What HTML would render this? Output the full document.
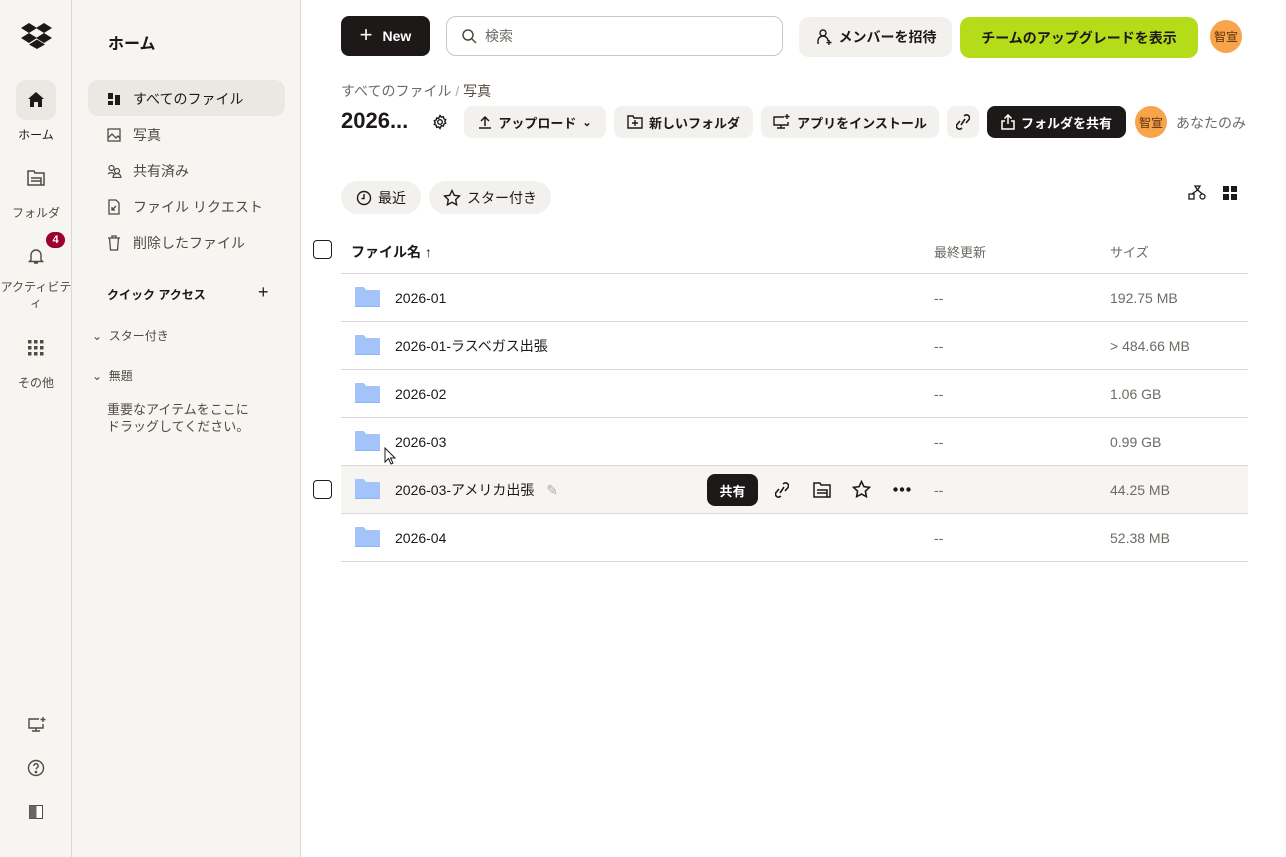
<!DOCTYPE html>
<html><head><meta charset="utf-8"><style>
*{box-sizing:border-box;margin:0;padding:0}
body{width:1286px;height:857px;overflow:hidden;font-family:"Liberation Sans","Noto Sans CJK JP",sans-serif;color:#1e1919;background:#fff;position:relative;font-size:14px}
.abs{position:absolute}
.rail{left:0;top:0;width:72px;height:857px;background:#f7f5f2;border-right:1px solid #dcd9d4}
.side{left:72px;top:0;width:229px;height:857px;background:#f7f5f2;border-right:1px solid #dcd9d4}
.rl{font-size:12px;color:#52493f;text-align:center;width:72px;left:0}
.si{left:107px;width:180px;font-size:14px;color:#52493f;display:flex;align-items:center;gap:10px}
.btn{background:#f3f1ee;border-radius:8px;display:flex;align-items:center;justify-content:center;font-size:13px;font-weight:bold;gap:6px}
.row{left:341px;width:907px;height:48px;border-bottom:1px solid #dcd9d4}
.fold{left:355px;width:25px;height:20px}
.nm{left:395px;font-size:14px;line-height:18px;height:18px}
.md{left:934px;color:#6f6a64;line-height:18px}
.sz{left:1110px;color:#6f6a64;font-size:14px;line-height:18px}
.cb{width:19px;height:19px;border:1.5px solid #1e1919;border-radius:4px}
</style></head><body>
<div class="abs rail"></div>
<div class="abs side"></div>
<svg class="abs" style="left:21px;top:23px" width="31" height="26" viewBox="0 0 31 26"><path fill="#1e1919" d="M8 0L0 5l8 5 8-5zM23 0l-8 5 8 5 8-5zM0 15l8 5 8-5-8-5zM23 10l-8 5 8 5 8-5zM8 21.5l8 4.5 8-4.5-8-5z"/></svg>
<div class="abs" style="left:16px;top:80px;width:40px;height:40px;border-radius:10px;background:#ebe8e3"></div>
<svg class="abs" style="left:26px;top:90px" width="20" height="20" viewBox="0 0 20 20"><path fill="#1e1919" d="M10 2L2 9h2v8h4v-5h4v5h4V9h2z"/></svg>
<div class="abs rl" style="top:126px;color:#1e1919">ホーム</div>
<svg class="abs" style="left:27px;top:170px" width="18" height="16" viewBox="0 0 18 16" fill="none" stroke="#52493f" stroke-width="1.5"><path d="M1 1h6l1 2h9v12H1z M4 8h10v7M4 11h10"/></svg>
<div class="abs rl" style="top:204px">フォルダ</div>
<svg class="abs" style="left:27px;top:247px" width="18" height="18" viewBox="0 0 18 18" fill="none" stroke="#52493f" stroke-width="1.4"><path d="M4 13V8a5 5 0 0110 0v5l1.5 1.5h-13zM7 16h4"/></svg>
<div class="abs" style="left:46px;top:232px;width:19px;height:16px;border-radius:8px;background:#9b0032;color:#fff;font-size:11px;font-weight:bold;text-align:center;line-height:16px">4</div>
<div class="abs rl" style="top:279px;line-height:16px">アクティビテ<br>ィ</div>
<svg class="abs" style="left:28px;top:340px" width="16" height="16" viewBox="0 0 16 16" fill="#52493f"><rect x="0" y="0" width="3.5" height="3.5"/><rect x="6" y="0" width="3.5" height="3.5"/><rect x="12" y="0" width="3.5" height="3.5"/><rect x="0" y="6" width="3.5" height="3.5"/><rect x="6" y="6" width="3.5" height="3.5"/><rect x="12" y="6" width="3.5" height="3.5"/><rect x="0" y="12" width="3.5" height="3.5"/><rect x="6" y="12" width="3.5" height="3.5"/><rect x="12" y="12" width="3.5" height="3.5"/></svg>
<div class="abs rl" style="top:374px">その他</div>
<svg class="abs" style="left:27px;top:716px" width="20" height="18" viewBox="0 0 20 18" fill="none" stroke="#52493f" stroke-width="1.4"><path d="M12 3H2v9h14V8M9 12v3M5 15h8M16 1v5M13.5 3.5h5"/></svg>
<svg class="abs" style="left:27px;top:759px" width="18" height="18" viewBox="0 0 18 18" fill="none" stroke="#52493f" stroke-width="1.4"><circle cx="9" cy="9" r="7.5"/><path d="M6.8 7a2.2 2.2 0 114 1.2c-.8.6-1.8 1-1.8 2.2"/><circle cx="9" cy="13" r=".6" fill="#52493f"/></svg>
<svg class="abs" style="left:29px;top:805px" width="14" height="14" viewBox="0 0 14 14"><rect x=".5" y=".5" width="13" height="13" fill="#fff" stroke="#52493f"/><rect x=".5" y=".5" width="7" height="13" fill="#6f6660"/></svg>

<div class="abs" style="left:108px;top:30px;font-size:16px;font-weight:bold">ホーム</div>
<div class="abs" style="left:88px;top:80px;width:197px;height:36px;border-radius:10px;background:#ebe8e3"></div>
<div class="abs si" style="top:89px;color:#1e1919"><svg width="14" height="14" viewBox="0 0 14 14" fill="#1e1919"><rect x="1" y="1" width="5" height="6"/><rect x="8" y="3" width="5" height="10"/><rect x="1" y="9" width="5" height="4"/></svg><span style="margin-left:2px">すべてのファイル</span></div>
<div class="abs si" style="top:125px"><svg width="14" height="14" viewBox="0 0 14 14" fill="none" stroke="#52493f" stroke-width="1.3"><rect x="1" y="1" width="12" height="12"/><path d="M1 10l4-4 4 4 2-2 2 2"/></svg><span style="margin-left:2px">写真</span></div>
<div class="abs si" style="top:161px"><svg width="16" height="14" viewBox="0 0 16 14" fill="none" stroke="#52493f" stroke-width="1.2"><circle cx="4.5" cy="4" r="2.5"/><circle cx="10" cy="7" r="2.5"/><path d="M1 10a4 4 0 016 0M6 13.5a4 4 0 018 0z"/></svg><span>共有済み</span></div>
<div class="abs si" style="top:197px"><svg width="14" height="16" viewBox="0 0 14 16" fill="none" stroke="#52493f" stroke-width="1.3"><path d="M2 1h7l3 3v11H2z M5 11l4-4M5 8v3h3"/></svg><span style="margin-left:2px">ファイル リクエスト</span></div>
<div class="abs si" style="top:233px"><svg width="14" height="16" viewBox="0 0 14 16" fill="none" stroke="#52493f" stroke-width="1.3"><path d="M1 3h12M5 3V1h4v2M2.5 3l1 12h7l1-12"/></svg><span style="margin-left:2px">削除したファイル</span></div>
<div class="abs" style="left:107px;top:286px;font-size:12px;font-weight:bold">クイック アクセス</div>
<div class="abs" style="left:258px;top:282px;font-size:18px">+</div>
<div class="abs" style="left:92px;top:327px;font-size:12px;color:#52493f">⌄&nbsp; スター付き</div>
<div class="abs" style="left:92px;top:367px;font-size:12px;color:#52493f">⌄&nbsp; 無題</div>
<div class="abs" style="left:107px;top:401px;font-size:13px;color:#52493f;line-height:17px">重要なアイテムをここに<br>ドラッグしてください。</div>

<div class="abs" style="left:341px;top:16px;width:89px;height:40px;background:#1e1919;border-radius:8px;color:#fff;font-weight:bold;font-size:14px;display:flex;align-items:center;justify-content:center;gap:10px"><span style="font-size:22px;font-weight:normal;margin-top:-3px">+</span>New</div>
<div class="abs" style="left:446px;top:16px;width:337px;height:40px;border:1px solid #ccc7c0;border-radius:10px;display:flex;align-items:center;padding-left:14px;color:#6f6a64;gap:8px"><svg width="16" height="16" viewBox="0 0 16 16" fill="none" stroke="#52493f" stroke-width="1.5"><circle cx="7" cy="7" r="5"/><path d="M11 11l4 4"/></svg>検索</div>
<div class="abs btn" style="left:799px;top:17px;width:153px;height:40px;font-size:14px;font-weight:bold;border-radius:10px"><svg width="18" height="18" viewBox="0 0 18 18" fill="none" stroke="#1e1919" stroke-width="1.4"><circle cx="8" cy="5" r="3"/><path d="M3 16v-3a5 5 0 0110 0M14 12v5M11.5 14.5h5"/></svg>メンバーを招待</div>
<div class="abs" style="left:960px;top:17px;width:238px;height:41px;background:#b4dc19;border-radius:10px;font-size:14px;font-weight:bold;display:flex;align-items:center;justify-content:center">チームのアップグレードを表示</div>
<div class="abs" style="left:1210px;top:20px;width:32px;height:33px;border-radius:50%;background:#f7a44b;font-size:12px;display:flex;align-items:center;justify-content:center;color:#5a2e0a">智宣</div>

<div class="abs" style="left:341px;top:81px;font-size:14px;color:#6f6a64">すべてのファイル <span style="color:#aaa">/</span> <span style="color:#52493f">写真</span></div>
<div class="abs" style="left:341px;top:108px;font-size:22px;font-weight:bold">2026...</div>
<svg class="abs" style="left:432px;top:114px" width="16" height="16" viewBox="0 0 16 16" fill="none" stroke="#1e1919" stroke-width="1.4"><circle cx="8" cy="8" r="2.3"/><path d="M8 1.5l1.3 1.6 2-.4.5 2 1.9.9-.9 1.8.9 1.8-1.9.9-.5 2-2-.4L8 14.5l-1.3-1.6-2 .4-.5-2-1.9-.9.9-1.8-.9-1.8 1.9-.9.5-2 2 .4z"/></svg>
<div class="abs btn" style="left:464px;top:106px;width:142px;height:32px"><svg width="14" height="14" viewBox="0 0 14 14" fill="none" stroke="#1e1919" stroke-width="1.5"><path d="M7 11V2M3 6l4-4 4 4M1 13h12"/></svg> アップロード <span style="font-size:11px">⌄</span></div>
<div class="abs btn" style="left:614px;top:106px;width:139px;height:32px"><svg width="16" height="14" viewBox="0 0 16 14" fill="none" stroke="#1e1919" stroke-width="1.4"><path d="M1 1h5l1 2h8v10H1zM8 5v6M5 8h6"/></svg>新しいフォルダ</div>
<div class="abs btn" style="left:761px;top:106px;width:178px;height:32px"><svg width="18" height="16" viewBox="0 0 18 16" fill="none" stroke="#1e1919" stroke-width="1.4"><path d="M11 3H1v8h14V8M8 11v3M4 14h8M14 0v5M11.5 2.5h5"/></svg>アプリをインストール</div>
<div class="abs btn" style="left:947px;top:106px;width:32px;height:32px"><svg width="14" height="18" viewBox="0 0 14 18" fill="none" stroke="#1e1919" stroke-width="1.6"><path d="M8 3l1.5-1a3 3 0 013.5 4.5L10 10M6 15l-1.5 1A3 3 0 011 11.5L4 8M9 6l-4 6"/></svg></div>
<div class="abs btn" style="left:987px;top:106px;width:139px;height:32px;background:#1e1919;color:#fff"><svg width="14" height="16" viewBox="0 0 14 16" fill="none" stroke="#fff" stroke-width="1.5"><path d="M7 10V1M3.5 4.5L7 1l3.5 3.5M4 7H1v8h12V7h-3"/></svg>フォルダを共有</div>
<div class="abs" style="left:1135px;top:106px;width:32px;height:32px;border-radius:50%;background:#f7a44b;font-size:12px;display:flex;align-items:center;justify-content:center;color:#5a2e0a">智宣</div>
<div class="abs" style="left:1176px;top:113px;font-size:14px;color:#6f6a64">あなたのみ</div>

<div class="abs btn" style="left:341px;top:181px;width:80px;height:33px;border-radius:17px;font-weight:normal;font-size:14px"><svg width="16" height="16" viewBox="0 0 16 16" fill="none" stroke="#1e1919" stroke-width="1.4"><circle cx="8" cy="8" r="6.5"/><path d="M8 4v4.5H5.5"/></svg>最近</div>
<div class="abs btn" style="left:429px;top:181px;width:122px;height:33px;border-radius:17px;font-weight:normal;font-size:14px"><svg width="18" height="18" viewBox="0 0 18 18" fill="none" stroke="#1e1919" stroke-width="1.4"><path d="M9 1.5l2.3 4.8 5.2.7-3.8 3.6.9 5.2L9 13.3l-4.6 2.5.9-5.2L1.5 7l5.2-.7z"/></svg>スター付き</div>
<svg class="abs" style="left:1188px;top:185px" width="19" height="16" viewBox="0 0 19 16" fill="none" stroke="#1e1919" stroke-width="1.3"><path d="M7 1h5l-2.5 4z"/><rect x="1" y="9" width="5" height="5"/><circle cx="14.5" cy="11.5" r="2.5"/><path d="M9.5 5L4 9M9.5 5l5 4"/></svg>
<svg class="abs" style="left:1223px;top:186px" width="14" height="14" viewBox="0 0 14 14" fill="#1e1919"><rect width="6" height="6"/><rect x="8" width="6" height="6"/><rect y="8" width="6" height="6"/><rect x="8" y="8" width="6" height="6"/></svg>

<div class="abs cb" style="left:313px;top:240px"></div>
<div class="abs" style="left:351px;top:242px;font-size:14px;font-weight:bold">ファイル名 <span style="font-weight:normal">↑</span></div>
<div class="abs" style="left:934px;top:242px;font-size:13px;color:#6f6a64">最終更新</div>
<div class="abs" style="left:1110px;top:242px;font-size:13px;color:#6f6a64">サイズ</div>
<div class="abs" style="left:341px;top:273px;width:907px;border-top:1px solid #dcd9d4"></div>

<div class="abs row" style="top:274px"></div>
<div class="abs row" style="top:322px"></div>
<div class="abs row" style="top:370px"></div>
<div class="abs row" style="top:418px"></div>
<div class="abs row" style="top:466px;background:#f7f5f2"></div>
<div class="abs row" style="top:514px"></div>

<svg width="0" height="0" style="position:absolute"><defs><symbol id="f" viewBox="0 0 25 20"><path fill="#a3c4fa" d="M0 1a1 1 0 011-1h8l2 3h13a1 1 0 011 1v15a1 1 0 01-1 1H1a1 1 0 01-1-1z"/><path fill="#8fb4f4" d="M0 19h25v1H0z"/></symbol></defs></svg>
<svg class="abs fold" style="top:287px"><use href="#f"/></svg>
<svg class="abs fold" style="top:335px"><use href="#f"/></svg>
<svg class="abs fold" style="top:383px"><use href="#f"/></svg>
<svg class="abs fold" style="top:431px"><use href="#f"/></svg>
<svg class="abs fold" style="top:479px"><use href="#f"/></svg>
<svg class="abs fold" style="top:527px"><use href="#f"/></svg>

<div class="abs nm" style="top:289px">2026-01</div>
<div class="abs nm" style="top:337px">2026-01-ラスベガス出張</div>
<div class="abs nm" style="top:385px">2026-02</div>
<div class="abs nm" style="top:433px">2026-03</div>
<div class="abs nm" style="top:481px">2026-03-アメリカ出張 <span style="color:#aaa;margin-left:8px">✎</span></div>
<div class="abs nm" style="top:529px">2026-04</div>

<div class="abs md" style="top:289px">--</div>
<div class="abs md" style="top:337px">--</div>
<div class="abs md" style="top:385px">--</div>
<div class="abs md" style="top:433px">--</div>
<div class="abs md" style="top:481px">--</div>
<div class="abs md" style="top:529px">--</div>

<div class="abs sz" style="top:289px">192.75 MB</div>
<div class="abs sz" style="top:337px">&gt; 484.66 MB</div>
<div class="abs sz" style="top:385px">1.06 GB</div>
<div class="abs sz" style="top:433px">0.99 GB</div>
<div class="abs sz" style="top:481px">44.25 MB</div>
<div class="abs sz" style="top:529px">52.38 MB</div>

<div class="abs cb" style="left:313px;top:480px"></div>
<div class="abs" style="left:707px;top:474px;width:51px;height:32px;background:#1e1919;color:#fff;border-radius:8px;font-size:13px;font-weight:bold;display:flex;align-items:center;justify-content:center">共有</div>
<svg class="abs" style="left:775px;top:481px" width="14" height="18" viewBox="0 0 14 18" fill="none" stroke="#1e1919" stroke-width="1.6"><path d="M8 3l1.5-1a3 3 0 013.5 4.5L10 10M6 15l-1.5 1A3 3 0 011 11.5L4 8M9 6l-4 6"/></svg>
<svg class="abs" style="left:813px;top:482px" width="18" height="16" viewBox="0 0 18 16" fill="none" stroke="#1e1919" stroke-width="1.5"><path d="M1 1h6l1 2h9v12H1z M4 8h10v7M4 11h10"/></svg>
<svg class="abs" style="left:852px;top:480px" width="19" height="19" viewBox="0 0 18 18" fill="none" stroke="#1e1919" stroke-width="1.5"><path d="M9 1.5l2.3 4.8 5.2.7-3.8 3.6.9 5.2L9 13.3l-4.6 2.5.9-5.2L1.5 7l5.2-.7z"/></svg>
<svg class="abs" style="left:893px;top:487px" width="18" height="5" viewBox="0 0 18 5" fill="#1e1919"><circle cx="2.5" cy="2.5" r="2.2"/><circle cx="9" cy="2.5" r="2.2"/><circle cx="15.5" cy="2.5" r="2.2"/></svg>
<svg class="abs" style="left:384px;top:447px" width="12" height="18" viewBox="0 0 12 18"><path d="M1 1v14l3.5-3.5 2.5 5.5 2-1-2.5-5H11z" fill="#fff" stroke="#1e1919" stroke-width="1"/></svg>
</body></html>
